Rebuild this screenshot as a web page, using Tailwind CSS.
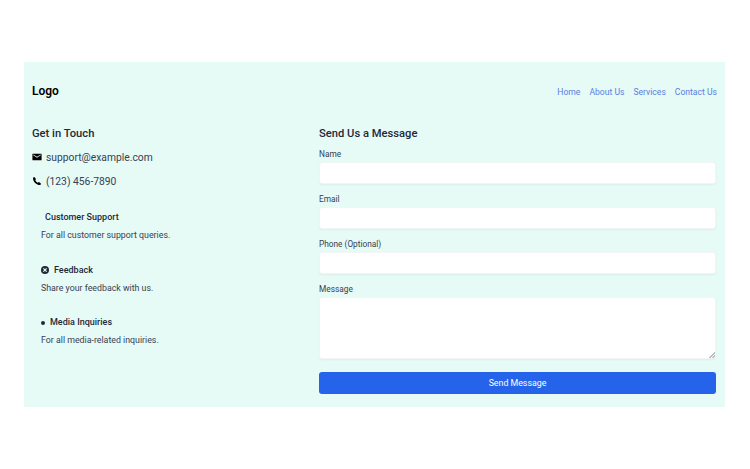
<!DOCTYPE html>
<html lang="en">

<head>
    <meta charset="UTF-8">
    <meta name="viewport" content="width=device-width, initial-scale=1.0">
    <title>Contact</title>
    <script src="https://cdn.jsdelivr.net/npm/@tailwindcss/browser@4"></script>
</head>

<body class="bg-white font-['Roboto',sans-serif] text-gray-900">
    <div class="h-[469px] pt-[62px] pl-6">
        <div class="w-[701px] h-[345px] bg-[#e6faf6] px-2">

            <!-- Header -->
            <header class="h-[58px] flex justify-between items-center">
                <div class="text-[12px] leading-4 font-semibold text-black">Logo</div>
                <nav class="flex gap-[9px] text-[8.6px] leading-4 text-[#5b7fe0] pt-[1px]">
                    <a href="#">Home</a>
                    <a href="#">About Us</a>
                    <a href="#">Services</a>
                    <a href="#">Contact Us</a>
                </nav>
            </header>

            <div class="grid grid-cols-[287px_397px] pt-[6px]">
                <!-- Left column -->
                <div>
                    <h2 class="text-[11.2px] leading-4 font-medium text-gray-800">Get in Touch</h2>
                    <div class="mt-[8px] flex items-center gap-[4px] text-[10.3px] leading-4 text-gray-700">
                        <svg class="w-[10px] h-[10px] mb-[2px]" viewBox="0 0 24 24" fill="#000"><path d="M2 4h20a1 1 0 0 1 1 1v14a1 1 0 0 1-1 1H2a1 1 0 0 1-1-1V5a1 1 0 0 1 1-1zm1 3.500 9 6 9-6V6l-9 5.500L3 6z"/></svg>
                        <span>support@example.com</span>
                    </div>
                    <div class="mt-[8px] flex items-center gap-[4px] text-[10.3px] leading-4 text-gray-700">
                        <svg class="w-[10px] h-[10px] mb-[2px]" viewBox="0 0 24 24" fill="#000"><path d="M6.600 3 9.500 7.500 7.800 10c1.300 2.700 3.500 4.900 6.200 6.200l2.500-1.700 4.500 2.900V20a1.500 1.500 0 0 1-1.500 1.500C10.500 21.500 2.500 13.500 2.500 4.500A1.500 1.500 0 0 1 4 3z"/></svg>
                        <span>(123) 456-7890</span>
                    </div>

                    <div class="pl-[9px] mt-[20px]">
                        <div class="h-[16px] flex items-center pl-[4px] text-[9px] font-medium text-gray-800">Customer Support</div>
                        <p class="mt-[1px] text-[8.8px] leading-4 text-gray-700">For all customer support queries.</p>

                        <div class="mt-[19.5px] h-[16px] flex items-center gap-[5px] text-[9px] font-medium text-gray-800">
                            <svg class="w-[8px] h-[8px] mb-[1px]" viewBox="0 0 24 24"><circle cx="12" cy="12" r="12" fill="#1f2937"/><path d="m7 7 10 10M17 7 7 17" stroke="#e6faf6" stroke-width="3.500"/></svg>
                            <span>Feedback</span>
                        </div>
                        <p class="mt-[1px] text-[8.8px] leading-4 text-gray-700">Share your feedback with us.</p>

                        <div class="mt-[19.5px] h-[16px] flex items-center gap-[5px] text-[9px] font-medium text-gray-800">
                            <span class="w-[4px] h-[4px] rounded-full bg-gray-800"></span>
                            <span>Media Inquiries</span>
                        </div>
                        <p class="mt-[1px] text-[8.8px] leading-4 text-gray-700">For all media-related inquiries.</p>
                    </div>
                </div>

                <!-- Form -->
                <form>
                    <h2 class="text-[11.2px] leading-4 font-medium text-gray-800">Send Us a Message</h2>
                    <label class="block mt-[6px] text-[8.300px] leading-[12px] text-gray-700">Name</label>
                    <input type="text" class="block mt-[2px] w-full h-[22px] bg-white rounded-[3px] border border-gray-100 shadow-xs">
                    <label class="block mt-[9px] text-[8.300px] leading-[12px] text-gray-700">Email</label>
                    <input type="text" class="block mt-[2px] w-full h-[22px] bg-white rounded-[3px] border border-gray-100 shadow-xs">
                    <label class="block mt-[9px] text-[8.300px] leading-[12px] text-gray-700">Phone (Optional)</label>
                    <input type="text" class="block mt-[2px] w-full h-[22px] bg-white rounded-[3px] border border-gray-100 shadow-xs">
                    <label class="block mt-[9px] text-[8.300px] leading-[12px] text-gray-700">Message</label>
                    <textarea class="block mt-[2px] w-full h-[62px] bg-white rounded-[3px] border border-gray-100 shadow-xs [&::-webkit-resizer]:bg-no-repeat [&::-webkit-resizer]:bg-right-bottom [&::-webkit-resizer]:bg-[length:6px_6px] [&::-webkit-resizer]:bg-[linear-gradient(135deg,transparent_45%,#bbb_45%,#bbb_60%,transparent_60%,transparent_72%,#bbb_72%,#bbb_87%,transparent_87%)]"></textarea>
                    <button type="button" class="block mt-[13px] w-full h-[22px] pt-[2px] bg-[#2563eb] rounded-[3px] text-white text-[8.8px]">Send Message</button>
                </form>
            </div>
        </div>
    </div>
</body>

</html>
